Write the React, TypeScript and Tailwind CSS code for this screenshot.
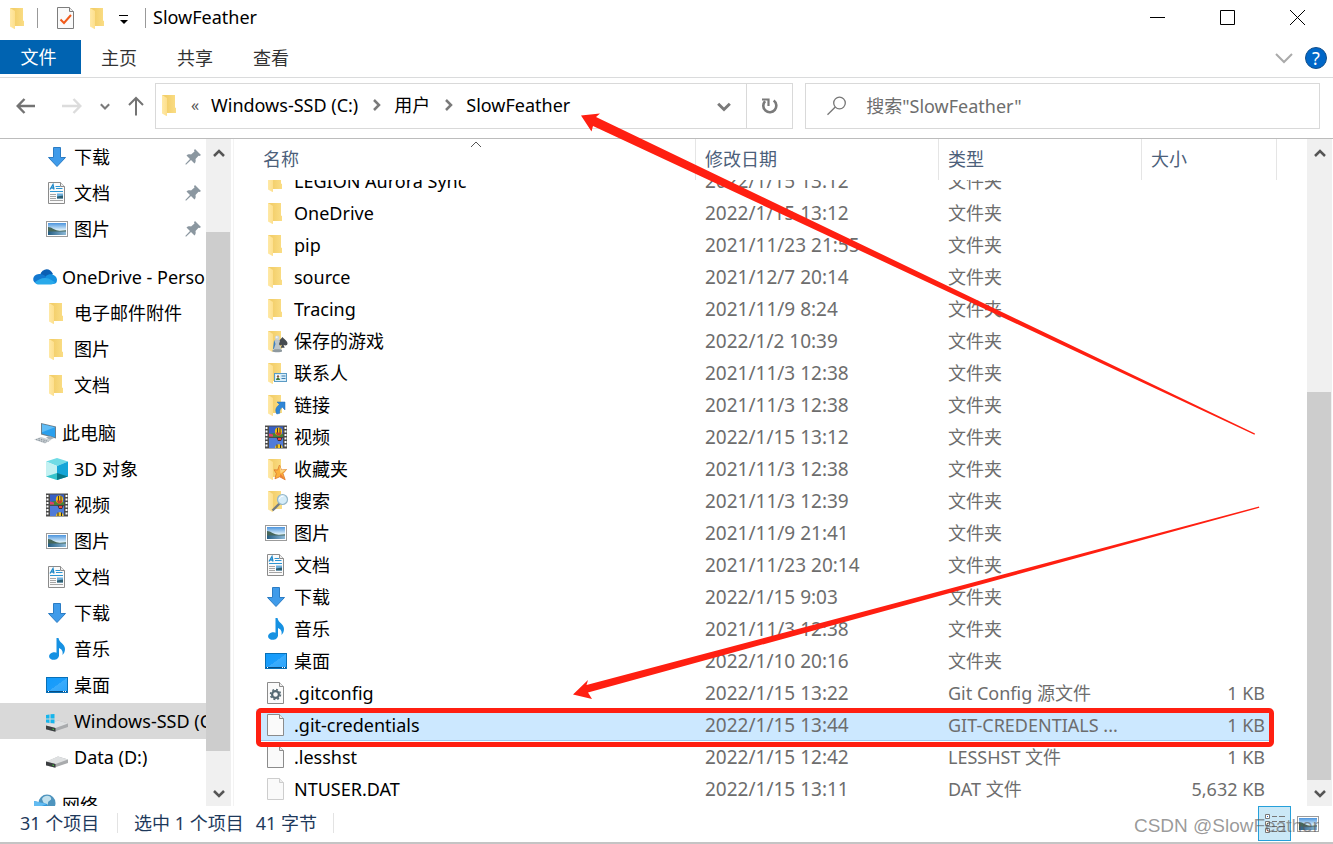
import type { ReactNode } from 'react';
import clsx from 'clsx';

type IconName =
  | 'folder'
  | 'games'
  | 'contacts'
  | 'links'
  | 'favorites'
  | 'searches'
  | 'video'
  | 'picture'
  | 'document'
  | 'download'
  | 'music'
  | 'desktop'
  | 'config'
  | 'file'
  | 'hidden'
  | 'onedrive'
  | 'computer'
  | 'objects'
  | 'windrive'
  | 'drive'
  | 'network';

interface NavItem {
  icon: IconName;
  label: string;
  pinned?: boolean;
  selected?: boolean;
}

interface NavGroup {
  root?: NavItem;
  items: NavItem[];
}

interface FileRow {
  icon: IconName;
  name: string;
  date: string;
  type: string;
  size?: string;
  selected?: boolean;
}

const navGroups: NavGroup[] = [
  {
    items: [
      { icon: 'download', label: '下载', pinned: true },
      { icon: 'document', label: '文档', pinned: true },
      { icon: 'picture', label: '图片', pinned: true },
    ],
  },
  {
    root: { icon: 'onedrive', label: 'OneDrive - Personal' },
    items: [
      { icon: 'folder', label: '电子邮件附件' },
      { icon: 'folder', label: '图片' },
      { icon: 'folder', label: '文档' },
    ],
  },
  {
    root: { icon: 'computer', label: '此电脑' },
    items: [
      { icon: 'objects', label: '3D 对象' },
      { icon: 'video', label: '视频' },
      { icon: 'picture', label: '图片' },
      { icon: 'document', label: '文档' },
      { icon: 'download', label: '下载' },
      { icon: 'music', label: '音乐' },
      { icon: 'desktop', label: '桌面' },
      { icon: 'windrive', label: 'Windows-SSD (C:)', selected: true },
      { icon: 'drive', label: 'Data (D:)' },
    ],
  },
  { root: { icon: 'network', label: '网络' }, items: [] },
];

const files: FileRow[] = [
  { icon: 'folder', name: 'LEGION Aurora Sync', date: '2022/1/15 13:12', type: '文件夹' },
  { icon: 'folder', name: 'OneDrive', date: '2022/1/15 13:12', type: '文件夹' },
  { icon: 'folder', name: 'pip', date: '2021/11/23 21:55', type: '文件夹' },
  { icon: 'folder', name: 'source', date: '2021/12/7 20:14', type: '文件夹' },
  { icon: 'folder', name: 'Tracing', date: '2021/11/9 8:24', type: '文件夹' },
  { icon: 'games', name: '保存的游戏', date: '2022/1/2 10:39', type: '文件夹' },
  { icon: 'contacts', name: '联系人', date: '2021/11/3 12:38', type: '文件夹' },
  { icon: 'links', name: '链接', date: '2021/11/3 12:38', type: '文件夹' },
  { icon: 'video', name: '视频', date: '2022/1/15 13:12', type: '文件夹' },
  { icon: 'favorites', name: '收藏夹', date: '2021/11/3 12:38', type: '文件夹' },
  { icon: 'searches', name: '搜索', date: '2021/11/3 12:39', type: '文件夹' },
  { icon: 'picture', name: '图片', date: '2021/11/9 21:41', type: '文件夹' },
  { icon: 'document', name: '文档', date: '2021/11/23 20:14', type: '文件夹' },
  { icon: 'download', name: '下载', date: '2022/1/15 9:03', type: '文件夹' },
  { icon: 'music', name: '音乐', date: '2021/11/3 12:38', type: '文件夹' },
  { icon: 'desktop', name: '桌面', date: '2022/1/10 20:16', type: '文件夹' },
  { icon: 'config', name: '.gitconfig', date: '2022/1/15 13:22', type: 'Git Config 源文件', size: '1 KB' },
  { icon: 'file', name: '.git-credentials', date: '2022/1/15 13:44', type: 'GIT-CREDENTIALS ...', size: '1 KB', selected: true },
  { icon: 'file', name: '.lesshst', date: '2022/1/15 12:42', type: 'LESSHST 文件', size: '1 KB' },
  { icon: 'hidden', name: 'NTUSER.DAT', date: '2022/1/15 13:11', type: 'DAT 文件', size: '5,632 KB' },
];

const folderShape = (
  <>
    <path d="M3 1h13v12.5l1 .5v5H3z" fill="url(#folder-back)" />
    <path d="M3 1l5 3v18l-1-.2L3 19.500z" fill="url(#folder-flap)" />
  </>
);

const pageShape = (stroke: string) => (
  <>
    <path d="M2.500.500h12l4 4v17h-16z" fill="#fafafa" stroke={stroke} />
    <path d="M14.500.500v4h4" fill="#eee" stroke={stroke} />
  </>
);

const driveShape = (
  <>
    <path d="M0 16l12-5.500 10 3v3.500L8.500 21.500 0 19.500z" fill="#a9abad" />
    <path d="M0 15.500l12-5 10 3-12.500 4.500z" fill="#dfe1e2" />
    <path d="M0 15.500l9.500 2.500v3.700L0 19.300z" fill="#3b3e40" />
    <path d="M6.500 18.500l1.500.4v1l-1.500-.4z" fill="#48d93c" />
  </>
);

const iconShapes: Record<IconName, ReactNode> = {
  folder: folderShape,
  games: (
    <>
      {folderShape}
      <path d="M17.500 7c2 2.500 5 4 5 6.500 0 2-2.500 2.500-4 1.200l1.200 3h-4l1.300-3c-1.500 1.300-4 .8-4-1.200 0-2.500 2.500-4 4.500-6.500z" fill="#464b50" />
      <path d="M9 11l3-2 2 9-6 1z" fill="#3c80c4" />
      <path d="M8.500 20l2-6-1-3 1-1.500h3.500l1 1.500-1 3 2.500 6z" fill="#bcc5ca" />
      <path d="M7.500 20c0-1 9.500-1 9.500 0v1.500c0 1-9.500 1-9.500 0z" fill="#8e999f" />
      <circle cx="12.200" cy="7.800" r="2.300" fill="#ccd5d9" />
      <circle cx="11.700" cy="7.200" r="1" fill="#f2f5f6" />
    </>
  ),
  contacts: (
    <>
      {folderShape}
      <rect x="9.500" y="11.500" width="12" height="8" fill="#d6edfa" stroke="#5b9bc4" />
      <rect x="11" y="13" width="4" height="5" fill="#fff" />
      <circle cx="13" cy="14.500" r="1.200" fill="#8a5a3a" />
      <path d="M11 18c0-3 4-3 4 0z" fill="#3d7a3e" />
      <path d="M16.500 14h4M16.500 16.500h4" stroke="#3f7fb0" />
    </>
  ),
  links: (
    <>
      {folderShape}
      <path d="M12 8h8v8l-2.700-2.700c-2 1.300-3 3.200-2.500 6l-3 .7c-2-3.700-1-7 2.700-9.500z" fill="#2f86d6" stroke="#1f6ab4" strokeWidth=".5" />
    </>
  ),
  favorites: (
    <>
      {folderShape}
      <path d="M14.500 7l2 5 5-.500-3.500 4 2.200 6.300-5.500-3-4.700 2 1.300-5.300-2.300-3.700 3.700.2z" fill="#fbb03b" stroke="#d9762b" strokeWidth=".8" />
      <path d="M14.500 7l2 5 5-.500-6 4z" fill="#fdd57f" />
      <path d="M15.500 15.500l4.700 6.300-5.500-3z" fill="#ec8139" />
    </>
  ),
  searches: (
    <>
      {folderShape}
      <path d="M14.500 13.500l-7 7" stroke="#747b80" strokeWidth="2.400" />
      <circle cx="17.500" cy="9.500" r="5" fill="#d5ecf8" stroke="#94b7c9" strokeWidth="1.200" />
      <path d="M14.500 9c.5-2 2-3 4-2.700" fill="none" stroke="#fff" />
    </>
  ),
  video: (
    <>
      <path d="M0-.500h22v23H0z" fill="#4a4a4a" />
      <path d="M1.500 1v21M20.500 1v21" stroke="#fff" strokeWidth="2" strokeDasharray="2 1.500" />
      <path d="M4 .500h14v10.500H4z" fill="#375fc4" />
      <path d="M4 12h14v10H4z" fill="#507bd8" />
      <path d="M4 8l5-1 4 1.500 5-.500v3H4z" fill="#478336" />
      <path d="M4 7.500l4 1v2H4z" fill="#e33c6a" />
      <ellipse cx="13.500" cy="5.500" rx="3.600" ry="3.900" fill="#f4bd16" />
      <path d="M12.500 2v6.500M15 2v6.500" stroke="#302d26" strokeWidth=".9" />
      <path d="M10.500 6.500h6l-1.500 3h-3z" fill="#c5402d" />
      <path d="M11.500 11.500h6l-1.500 3.500h-3z" fill="#472c2d" />
      <path d="M13 12h3v2h-3z" fill="#ee4537" />
      <path d="M10 22c0-5 7.500-5 7.500 0z" fill="#f4c522" />
      <path d="M12 18.500V22M15.500 18.500V22" stroke="#292929" />
    </>
  ),
  picture: (
    <>
      <rect x=".5" y="3.500" width="21" height="15" fill="#fff" stroke="#9b9b9b" />
      <path d="M2 5h18v12H2z" fill="url(#picture-sky)" />
      <path d="M2 9c4 .2 6 3 10 3.500 3 .4 5 0 8-.3V14H2z" fill="#47675a" />
      <path d="M2 13.500h18V17H2z" fill="url(#picture-lake)" />
    </>
  ),
  document: (
    <>
      {pageShape('#8b8b8b')}
      <path d="M4 7.500l3-5 1 5M5.500 6H8" fill="none" stroke="#1e88c9" strokeWidth="1.300" />
      <path d="M9.500 4.500H14M10 6.500h6.500M4 9.500h13" stroke="#2b95d3" strokeWidth="1.200" />
      <path d="M4 12.500h6M4 14.500h6M4 16.500h6M4 18.500h13" stroke="#a5a5a5" />
      <path d="M11 11.500h6v5h-6z" fill="#6daedb" />
      <path d="M11 14.500l6-1v3h-6z" fill="#2e5f72" />
    </>
  ),
  download: <path d="M7.500 1.500h7v10h5L11 20.500l-8.500-9h5z" fill="#3f9bea" stroke="#2b7cc4" />,
  music: (
    <>
      <path d="M10.500 0h2c.5 4.500 6.500 6 6.500 11 0 2.500-1 4.500-2.500 6 .8-4-1-6-3.500-7v8H10.500z" fill="#1691e2" />
      <ellipse cx="8" cy="18" rx="5" ry="3.800" fill="#1691e2" transform="rotate(-12 8 18)" />
    </>
  ),
  desktop: (
    <>
      <rect x=".5" y="3.500" width="21" height="15" fill="url(#desktop-fill)" stroke="#0870b7" />
      <path d="M1 17.500h20" stroke="#064c82" />
      <path d="M2 17.500h1M17 17.500h1M19 17.500h1" stroke="#fff" />
    </>
  ),
  config: (
    <>
      {pageShape('#8b8b8b')}
      <circle cx="10.500" cy="12.500" r="3.400" fill="none" stroke="#566a74" strokeWidth="2.200" />
      <circle cx="10.500" cy="12.500" r="5" fill="none" stroke="#566a74" strokeWidth="1.500" strokeDasharray="1.960 1.960" />
    </>
  ),
  file: pageShape('#8b8b8b'),
  hidden: pageShape('#cdcdcd'),
  onedrive: (
    <>
      <path d="M6 9C8 2 16 1 19 8l-6 5z" fill="#0a5fb4" />
      <path d="M4 18C-3 17-2 8 5 8c4-.5 6 2 9 4l-9 6z" fill="#1278d0" />
      <path d="M12 10c4-4 11-1 11 4 0 3-2 4-4 4l-8-4z" fill="#1490df" />
      <path d="M1 16c3-2 6-4 10-4 5 0 7 3 10 4-1 1.500-2 2.500-4 2.500H4c-1.500 0-2.500-1-3-2.500z" fill="#29a9ea" />
    </>
  ),
  computer: (
    <>
      <path d="M7 1l15 3.500v12L7 12.500z" fill="#6b7f8c" />
      <path d="M8 2.200l13 3v10L8 11.500z" fill="#2aa0ee" />
      <path d="M8 2.200l13 3-13 5z" fill="#61bdf6" />
      <path d="M12 15.500l4-1.500 4 2-4 2z" fill="#a8b2b8" />
      <path d="M0 17.500l7-2.500 10 3-6 3.500z" fill="#c9cfd3" />
      <path d="M2 17.500l10 3M4.500 16.500l10 3" stroke="#87929a" strokeDasharray="1.500 1" />
    </>
  ),
  objects: (
    <>
      <path d="M0 3.500l11-3.500 11 3.500-11 4.500z" fill="#6fdbe5" />
      <path d="M0 3.500l11 4.500v14L0 18.500z" fill="#c3f1f2" />
      <path d="M11 8l11-4.500v15L11 22z" fill="#14a5d8" />
      <path d="M11 15l11 3.500L11 22z" fill="#087887" />
      <path d="M11 15L0 18.500 11 22z" fill="#35c3cb" />
    </>
  ),
  windrive: (
    <>
      {driveShape}
      <path d="M0 5l3.500-.500V8.500H0zM4.500 4.300L8.500 4v4.500h-4zM0 9.500h3.500V13L0 12.600zM4.500 9.500h4v4l-4-.4z" fill="#16b5ec" />
    </>
  ),
  drive: driveShape,
  network: (
    <>
      <circle cx="13" cy="9" r="8.500" fill="#4e94be" />
      <path d="M8 5c2-4 8-4 9-1s-3 2-3 5-4 3-6-4z" fill="#c0e0ed" />
      <path d="M0 7l13 3v10L0 16z" fill="#2c96dc" />
      <path d="M0 7l13 3-13 5z" fill="#62bbf1" />
    </>
  ),
};

function Icon({ name, className }: { name: IconName; className?: string }) {
  return (
    <svg viewBox="0 0 22 22" className={clsx('size-[22px] shrink-0 overflow-visible', className)} aria-hidden="true">
      {iconShapes[name]}
    </svg>
  );
}

function IconGradients() {
  return (
    <svg className="absolute size-0" aria-hidden="true">
      <defs>
        <linearGradient id="folder-back">
          <stop offset=".3" stopColor="#f3cf6b" />
          <stop offset="1" stopColor="#fadd85" />
        </linearGradient>
        <linearGradient id="folder-flap">
          <stop stopColor="#ffe9a6" />
          <stop offset="1" stopColor="#fddf8d" />
        </linearGradient>
        <linearGradient id="picture-sky" x2="0" y2="1">
          <stop stopColor="#4b94dd" />
          <stop offset=".6" stopColor="#e2f3fb" />
        </linearGradient>
        <linearGradient id="picture-lake">
          <stop stopColor="#235c82" />
          <stop offset="1" stopColor="#8ebad8" />
        </linearGradient>
        <linearGradient id="desktop-fill" y2="1">
          <stop stopColor="#119bfb" />
          <stop offset=".5" stopColor="#1b9dfb" />
          <stop offset=".51" stopColor="#3aacfc" />
          <stop offset="1" stopColor="#2ba3fb" />
        </linearGradient>
      </defs>
    </svg>
  );
}

interface ChevronProps {
  direction: 'up' | 'down' | 'right';
  className?: string;
  weight?: number;
}

function Chevron({ direction, className, weight = 2.5 }: ChevronProps) {
  const paths = { up: 'M1 8l5-5 5 5', down: 'M1 4l5 5 5-5', right: 'M4 1l5 5-5 5' };
  return (
    <svg viewBox="0 0 12 12" className={clsx('size-3 shrink-0', className)} fill="none" stroke="currentColor" strokeWidth={weight} aria-hidden="true">
      <path d={paths[direction]} />
    </svg>
  );
}

function TitleBar() {
  return (
    <header className="flex h-10 shrink-0 items-start justify-between">
      <div className="flex h-9 items-center pl-[7px]">
        <Icon name="folder" />
        <span className="ml-2 h-5 w-px bg-[#999]" />
        <button type="button" aria-label="属性" className="ml-[17px]">
          <svg viewBox="0 0 22 22" className="size-[22px]" fill="none">
            {pageShape('#7d7d7d')}
            <path d="M5.500 12.500l3.500 3.500 7-8" stroke="#f05a1a" strokeWidth="2" />
          </svg>
        </button>
        <button type="button" aria-label="新建文件夹" className="ml-[10px]">
          <Icon name="folder" />
        </button>
        <button type="button" aria-label="自定义快速访问工具栏" className="ml-[10px]">
          <svg viewBox="0 0 10 10" className="mt-1 size-[10px]">
            <path d="M0 0h9v1H0zM1 5h8L5 9z" fill="#000" />
          </svg>
        </button>
        <span className="ml-4 h-5 w-px bg-[#999]" />
        <h1 className="ml-[7px] h-9 leading-[34px]">SlowFeather</h1>
      </div>
      <div className="flex h-[35px] pr-px">
        <button type="button" aria-label="最小化" className="flex w-[70px] items-center justify-center">
          <svg viewBox="0 0 15 15" className="size-[15px]" stroke="#000">
            <path d="M0 7.500h15" />
          </svg>
        </button>
        <button type="button" aria-label="最大化" className="flex w-[70px] items-center justify-center">
          <svg viewBox="0 0 15 15" className="size-[15px]" stroke="#000" fill="none">
            <path d="M.500.500h14v14H.500z" />
          </svg>
        </button>
        <button type="button" aria-label="关闭" className="flex w-[70px] items-center justify-center">
          <svg viewBox="0 0 15 15" className="size-[15px]" stroke="#000">
            <path d="M0 0l15 15M15 0L0 15" />
          </svg>
        </button>
      </div>
    </header>
  );
}

function RibbonTabs() {
  return (
    <div className="flex h-[38px] shrink-0 items-start justify-between border-b border-[#dadbdc]">
      <div className="flex text-[#333]">
        <button type="button" className="h-[34px] w-[81px] bg-[#0063b1] pr-1 text-white">文件</button>
        <button type="button" className="h-9 px-5">主页</button>
        <button type="button" className="h-9 px-5">共享</button>
        <button type="button" className="h-9 px-5">查看</button>
      </div>
      <div className="flex h-9 items-center gap-3 pr-1.5">
        <button type="button" aria-label="展开功能区">
          <svg viewBox="0 0 18 12" className="h-3 w-[18px]" fill="none" stroke="#aaa" strokeWidth="2">
            <path d="M1 2l8 8 8-8" />
          </svg>
        </button>
        <button type="button" aria-label="帮助" className="flex size-[22px] items-center justify-center rounded-full border border-[#124f8c] bg-[#0067c8] text-white">
          ?
        </button>
      </div>
    </div>
  );
}

function AddressBar() {
  return (
    <div className="flex h-[61px] shrink-0 items-start border-b border-[#bcbcbc] pt-[5px] pr-[13px]">
      <div className="flex h-[46px] w-[155px] shrink-0 items-center pl-4 text-[#7a7a7a]">
        <button type="button" aria-label="后退">
          <svg viewBox="0 0 20 16" className="h-4 w-5" fill="none" stroke="#737373" strokeWidth="2.400">
            <path d="M19 8H2M8.500 1L1.700 8l6.800 7" />
          </svg>
        </button>
        <button type="button" aria-label="前进" className="ml-[26px]">
          <svg viewBox="0 0 20 16" className="h-4 w-5" fill="none" stroke="#dcdcdc" strokeWidth="2.400">
            <path d="M0 8h18M11.500 1l6.800 7-6.800 7" />
          </svg>
        </button>
        <button type="button" aria-label="最近浏览的位置" className="ml-[18px]">
          <Chevron direction="down" className="size-[10px]" />
        </button>
        <button type="button" aria-label="上移" className="ml-[18px]">
          <svg viewBox="0 0 16 20" className="h-5 w-4" fill="none" stroke="#737373" strokeWidth="2">
            <path d="M8 19.500V2M1 9l7-7 7 7" />
          </svg>
        </button>
      </div>
      <div className="flex h-[46px] min-w-0 flex-1 items-center border border-[#d9d9d9]">
        <nav aria-label="地址" className="flex h-full min-w-0 flex-1 items-center pb-0.5 pl-[3px]">
          <Icon name="folder" />
          <span className="ml-[10px] w-[13px] text-base text-[#555]">«</span>
          <a href="#c" className="ml-[7px] whitespace-nowrap">Windows-SSD (C:)</a>
          <Chevron direction="right" className="mx-3 text-[#7a7a7a]" />
          <a href="#users" className="whitespace-nowrap">用户</a>
          <Chevron direction="right" className="mx-3 text-[#7a7a7a]" />
          <a href="#slowfeather" className="whitespace-nowrap">SlowFeather</a>
        </nav>
        <button type="button" aria-label="以前的位置" className="flex w-11 items-center justify-center">
          <Chevron direction="down" className="size-[14px] text-[#7a7a7a]" />
        </button>
        <button type="button" aria-label="刷新" className="flex h-full w-[46px] items-center justify-center border-l border-[#d9d9d9]">
          <svg viewBox="0 0 18 18" className="size-[18px]" fill="none" stroke="#7a7a7a" strokeWidth="2.600">
            <path d="M12.700 3.500a6.500 6.500 0 1 1-8.600.7" />
            <path d="M1 2.500h6.500V9" strokeWidth="2.200" />
          </svg>
        </button>
      </div>
      <label className="ml-3 flex h-[46px] w-[39%] shrink-0 items-center border border-[#d9d9d9] pl-[21px]">
        <svg viewBox="0 0 20 20" className="size-5 shrink-0" fill="none" stroke="#767676" strokeWidth="1.300">
          <circle cx="12.500" cy="7" r="5.800" />
          <path d="M8.300 11L.500 18.800" />
        </svg>
        <input type="search" aria-label="搜索" placeholder={'搜索"SlowFeather"'} className="ml-[19px] min-w-0 flex-1 outline-none placeholder:text-[#6d6d6d]" />
      </label>
    </div>
  );
}

function PinIcon() {
  return (
    <svg viewBox="0 0 16 16" className="mr-[5px] ml-auto size-4 shrink-0" fill="#8b97a0" aria-hidden="true">
      <path d="M10 0l6 6-1.500 1-1-.300-3 3.300c.5 2 0 3.500-1 4.500L6 11l-5 4.700-.7-.7L5 10 1.500 6.500c1-1 2.700-1.500 4.500-1l3.500-3L9 1.200z" />
    </svg>
  );
}

function NavLink({ item, root }: { item: NavItem; root?: boolean }) {
  return (
    <a
      href="#nav"
      className={clsx('flex h-9 items-center gap-[6px] whitespace-nowrap', root ? 'pl-[34px]' : 'pl-[46px]', item.selected && 'bg-[#d9d9d9]')}
    >
      <Icon name={item.icon} />
      {item.label}
      {item.pinned && <PinIcon />}
    </a>
  );
}

function Sidebar() {
  return (
    <nav aria-label="导航窗格" className="flex w-[206px] shrink-0 flex-col gap-3 overflow-hidden">
      {navGroups.map((group, index) => (
        <div key={index} className="shrink-0">
          {group.root && <NavLink item={group.root} root />}
          {group.items.map((item) => (
            <NavLink key={item.label} item={item} />
          ))}
        </div>
      ))}
    </nav>
  );
}

function Scrollbar({ before, thumb, after }: { before: number; thumb: number; after: number }) {
  return (
    <div className="flex w-[25px] shrink-0 flex-col bg-[#f0f0f0] text-[#555]">
      <button type="button" aria-label="向上滚动" className="flex h-[30px] items-center justify-center">
        <Chevron direction="up" />
      </button>
      <div className="flex flex-1 flex-col">
        <div style={{ flexGrow: before }} />
        <div className="mr-px bg-[#cdcdcd]" style={{ flexGrow: thumb }} />
        <div style={{ flexGrow: after }} />
      </div>
      <button type="button" aria-label="向下滚动" className="flex h-[26px] items-center justify-center">
        <Chevron direction="down" />
      </button>
    </div>
  );
}

function FileTable() {
  return (
    <table className="flex min-w-0 flex-1 flex-col pr-[30px] pl-[22px]">
      <thead className="block shrink-0 text-[#4c607a]">
        <tr className="grid h-[41px] grid-cols-[minmax(0,1fr)_243px_203px_135px] text-left leading-10">
          <th className="relative border-r border-[#e5e5e5] pl-[7px] font-normal">
            名称
            <Chevron direction="up" weight={1} className="absolute top-0 left-1/2 -translate-x-1/2 text-[#555]" />
          </th>
          <th className="border-r border-[#e5e5e5] pl-[9px] font-normal">修改日期</th>
          <th className="border-r border-[#e5e5e5] pl-[9px] font-normal">类型</th>
          <th className="border-r border-[#e5e5e5] pl-[9px] font-normal">大小</th>
        </tr>
      </thead>
      <tbody className="flex min-h-0 flex-1 flex-col justify-end overflow-hidden pb-px">
        {files.map((file) => (
          <tr
            key={file.name}
            className={clsx(
              'mr-[5px] grid h-8 shrink-0 grid-cols-[minmax(0,1fr)_243px_203px_130px] leading-8 whitespace-nowrap text-[#6d6d6d]',
              file.selected && 'border-b border-[#99c9ef] bg-[#cce8ff]',
            )}
          >
            <td className="flex items-center gap-[7px] pl-[9px] text-black">
              <Icon name={file.icon} />
              {file.name}
            </td>
            <td className="pl-[9px] text-[19px]">{file.date}</td>
            <td className="pl-[9px]">{file.type}</td>
            <td className="pr-[7px] text-right">{file.size}</td>
          </tr>
        ))}
      </tbody>
    </table>
  );
}

function StatusBar() {
  return (
    <footer className="flex h-9 shrink-0 items-center text-[#1e395b]">
      <div className="flex h-full items-center pb-0.5">
        <span className="w-[117px] pl-5">31 个项目</span>
        <span className="h-5 w-px bg-[#e3e3e3]" />
        <span className="pl-4">选中 1 个项目</span>
        <span className="pr-4 pl-3">41 字节</span>
        <span className="h-5 w-px bg-[#e3e3e3]" />
      </div>
      <div className="ml-auto flex h-full items-start gap-[6px] pr-[14px]">
        <button type="button" aria-label="详细信息" className="flex h-[35px] w-[33px] items-center justify-center border border-[#26a0da] bg-[#cbe8f6]">
          <svg viewBox="0 0 22 22" className="size-[22px]" fill="none" stroke="#777">
            <path d="M1.500 1.500h4v4h-4zM1.500 8.500h4v4h-4zM1.500 15.500h4v4h-4z" fill="#fff" />
            <path d="M8 3.500h5M15 3.500h6M8 8.500h5M15 8.500h6M8 13.500h5M15 13.500h6M8 18.500h5M15 18.500h6" />
            <path d="M3 3.500h1" stroke="#2467c8" />
            <path d="M3 10.500h1" stroke="#47983d" />
            <path d="M3 17.500h1" stroke="#d8442e" />
          </svg>
        </button>
        <button type="button" aria-label="大缩略图" className="h-[35px]">
          <Icon name="picture" />
        </button>
      </div>
    </footer>
  );
}

function Annotations() {
  return (
    <>
      <svg className="pointer-events-none absolute top-0 left-0 h-[844px] w-[1333px]" fill="#ff1f11" aria-hidden="true">
        <path d="M581 115.500l19-2-4 3.500L1255 433.500l-.500 1.300L593 126l-1.500 5.500z" />
        <path d="M573 694.500l15-14.500-1.500 5L1259 506.500l.300 1.300L588 692.500l4 6.500z" />
        <rect x="258.500" y="710.500" width="1013" height="34" rx="2.500" fill="none" stroke="#ff1f11" strokeWidth="5" />
      </svg>
      <p className="pointer-events-none absolute right-[14px] bottom-[3px] font-['Liberation_Sans',sans-serif] text-[19px] text-[#555]/60">CSDN @SlowFeather</p>
    </>
  );
}

export default function App() {
  return (
    <div className="relative flex h-screen flex-col overflow-hidden bg-white font-['Noto_Sans','Noto_Sans_CJK_SC',sans-serif] text-lg text-black">
      <IconGradients />
      <TitleBar />
      <RibbonTabs />
      <AddressBar />
      <main className="flex min-h-0 flex-1 pr-px">
        <Sidebar />
        <Scrollbar before={63} thumb={519} after={29} />
        <div className="ml-0.5 w-px bg-[#f3f3f3]" />
        <FileTable />
        <Scrollbar before={223} thumb={388} after={0} />
      </main>
      <StatusBar />
      <div className="h-0.5 shrink-0 bg-[#c4c4c4]" />
      <Annotations />
    </div>
  );
}
